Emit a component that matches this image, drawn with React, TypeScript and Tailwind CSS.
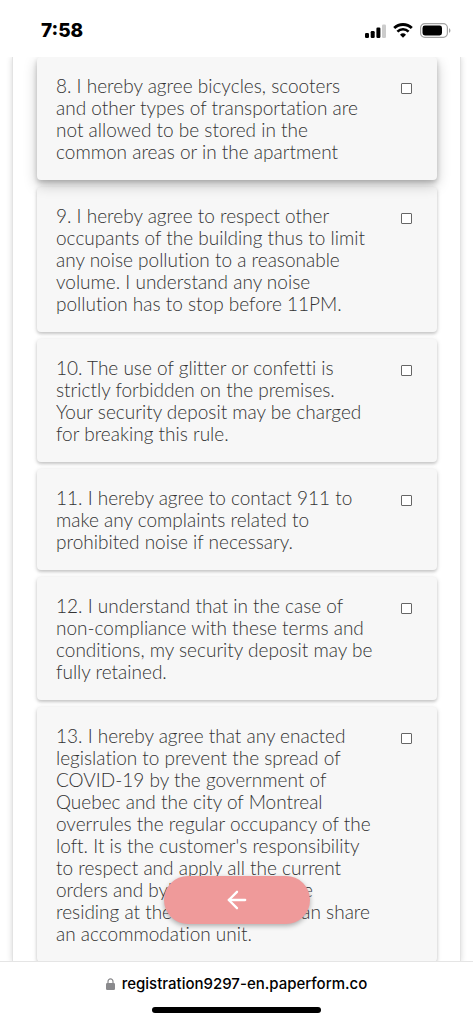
import { ArrowLeft } from "lucide-react";

const rules = [
  {
    id: 8,
    text: "8. I hereby agree bicycles, scooters and other types of transportation are not allowed to be stored in the common areas or in the apartment",
    raised: true,
  },
  {
    id: 9,
    text: "9. I hereby agree to respect other occupants of the building thus to limit any noise pollution to a reasonable volume. I understand any noise pollution has to stop before 11PM.",
  },
  {
    id: 10,
    text: "10. The use of glitter or confetti is strictly forbidden on the premises. Your security deposit may be charged for breaking this rule.",
  },
  {
    id: 11,
    text: "11. I hereby agree to contact 911 to make any complaints related to prohibited noise if necessary.",
  },
  {
    id: 12,
    text: "12. I understand that in the case of non-compliance with these terms and conditions, my security deposit may be fully retained.",
  },
  {
    id: 13,
    text: "13. I hereby agree that any enacted legislation to prevent the spread of COVID-19 by the government of Quebec and the city of Montreal overrules the regular occupancy of the loft. It is the customer's responsibility to respect and apply all the current orders and bylaws. Only people residing at the same address can share an accommodation unit.",
  },
];

function StatusBar() {
  return (
    <header className="flex h-[57px] shrink-0 items-center justify-between bg-white pt-1 pr-[22px] pl-[41px]">
      <span className="font-['Inter',sans-serif] text-[19px] leading-6 font-extrabold text-black">7:58</span>
      <div className="flex items-center gap-[7px]">
        <svg width="21" height="14" viewBox="0 0 21 14" aria-label="Signal">
          <rect x="0" y="9" width="4" height="5" rx="1.2" />
          <rect x="5.7" y="7" width="4" height="7" rx="1.2" />
          <rect x="11.4" y="3.5" width="4" height="10.5" rx="1.2" />
          <rect x="17" y="0.5" width="4" height="13.5" rx="1.2" fill="#cccccc" />
        </svg>
        <svg width="20" height="15" viewBox="0 0 20 15" aria-label="Wi-Fi">
          <path d="M1.2 5.1a12.6 12.6 0 0 1 17.6 0" fill="none" stroke="#000" strokeWidth="2.8" />
          <path d="M4.4 8.6a8 8 0 0 1 11.2 0" fill="none" stroke="#000" strokeWidth="2.6" />
          <path d="M7 11.7a4.4 4.4 0 0 1 6 0L10 14.7z" />
        </svg>
        <svg width="31" height="15" viewBox="0 0 31 15" aria-label="Battery">
          <rect x="0.6" y="0.6" width="26.8" height="13.8" rx="4.2" fill="none" stroke="#a3a3a3" strokeWidth="1.2" />
          <rect x="2.5" y="2.5" width="19.5" height="10" rx="2.4" />
          <path d="M29 5.2c1.9.6 1.9 4 0 4.6z" fill="#a3a3a3" />
        </svg>
      </div>
    </header>
  );
}

function RuleCard({ id, text, raised }: { id: number; text: string; raised?: boolean }) {
  return (
    <label
      htmlFor={`rule-${id}`}
      className={
        raised
          ? "relative flex items-start justify-between rounded-[4px] bg-[#f7f7f7] pt-[18px] pr-[25px] pb-[17px] pl-[19px] shadow-[0_5px_14px_rgba(0,0,0,0.22),0_3px_5px_rgba(0,0,0,0.2)]"
          : "flex items-start justify-between rounded-[4px] bg-[#f7f7f7] pt-[18px] pr-[25px] pb-[17px] pl-[19px] shadow-[0_1px_5px_rgba(0,0,0,0.14),0_2px_3px_rgba(0,0,0,0.14)]"
      }
    >
      <span className="w-[317px] text-[19px] leading-[22px] font-light text-[#333333] [font-variant-ligatures:none]">
        {text}
      </span>
      <input
        id={`rule-${id}`}
        type="checkbox"
        className="mt-[8px] size-[11px] shrink-0 appearance-none rounded-[1px] border border-[#666666] bg-white checked:bg-[#666666]"
      />
    </label>
  );
}

function AddressBar() {
  return (
    <footer className="flex shrink-0 flex-col items-center border-t border-[#e5e5e5] bg-white pt-[11px] pb-[10px]">
      <div className="flex items-center gap-[7px]">
        <svg width="9" height="12" viewBox="0 0 9 12" aria-hidden="true">
          <rect x="0" y="5" width="9" height="7" rx="1.2" fill="#8a8a8d" />
          <path d="M2 5.5V3.4a2.5 2.6 0 0 1 5 0v2.1" fill="none" stroke="#8a8a8d" strokeWidth="1.2" />
        </svg>
        <span className="font-['Inter',sans-serif] text-[15px] leading-[22px] font-medium text-black">
          registration9297-en.paperform.co
        </span>
      </div>
      <div className="mt-3 h-[6px] w-[169px] rounded-full bg-black" />
    </footer>
  );
}

export default function App() {
  return (
    <div className="flex h-dvh flex-col bg-white font-['Lato',sans-serif]">
      <StatusBar />
      <div className="relative flex min-h-0 flex-1 flex-col">
        <main className="flex-1 overflow-y-auto px-3 [scrollbar-width:none]">
          <form className="flex flex-col gap-[7px] border-x border-[#e3e3e3] pr-[23px] pl-6 shadow-[0_0_6px_rgba(0,0,0,0.16)]">
            {rules.map((rule) => (
              <RuleCard key={rule.id} {...rule} />
            ))}
          </form>
        </main>
        <button
          type="button"
          aria-label="Back"
          className="absolute bottom-[37px] left-1/2 flex h-12 w-[146px] -translate-x-1/2 items-center justify-center rounded-full bg-[#ef9a9a] text-white shadow-[0_2px_5px_rgba(0,0,0,0.3)]"
        >
          <ArrowLeft size={28} strokeWidth={2} />
        </button>
      </div>
      <AddressBar />
    </div>
  );
}
